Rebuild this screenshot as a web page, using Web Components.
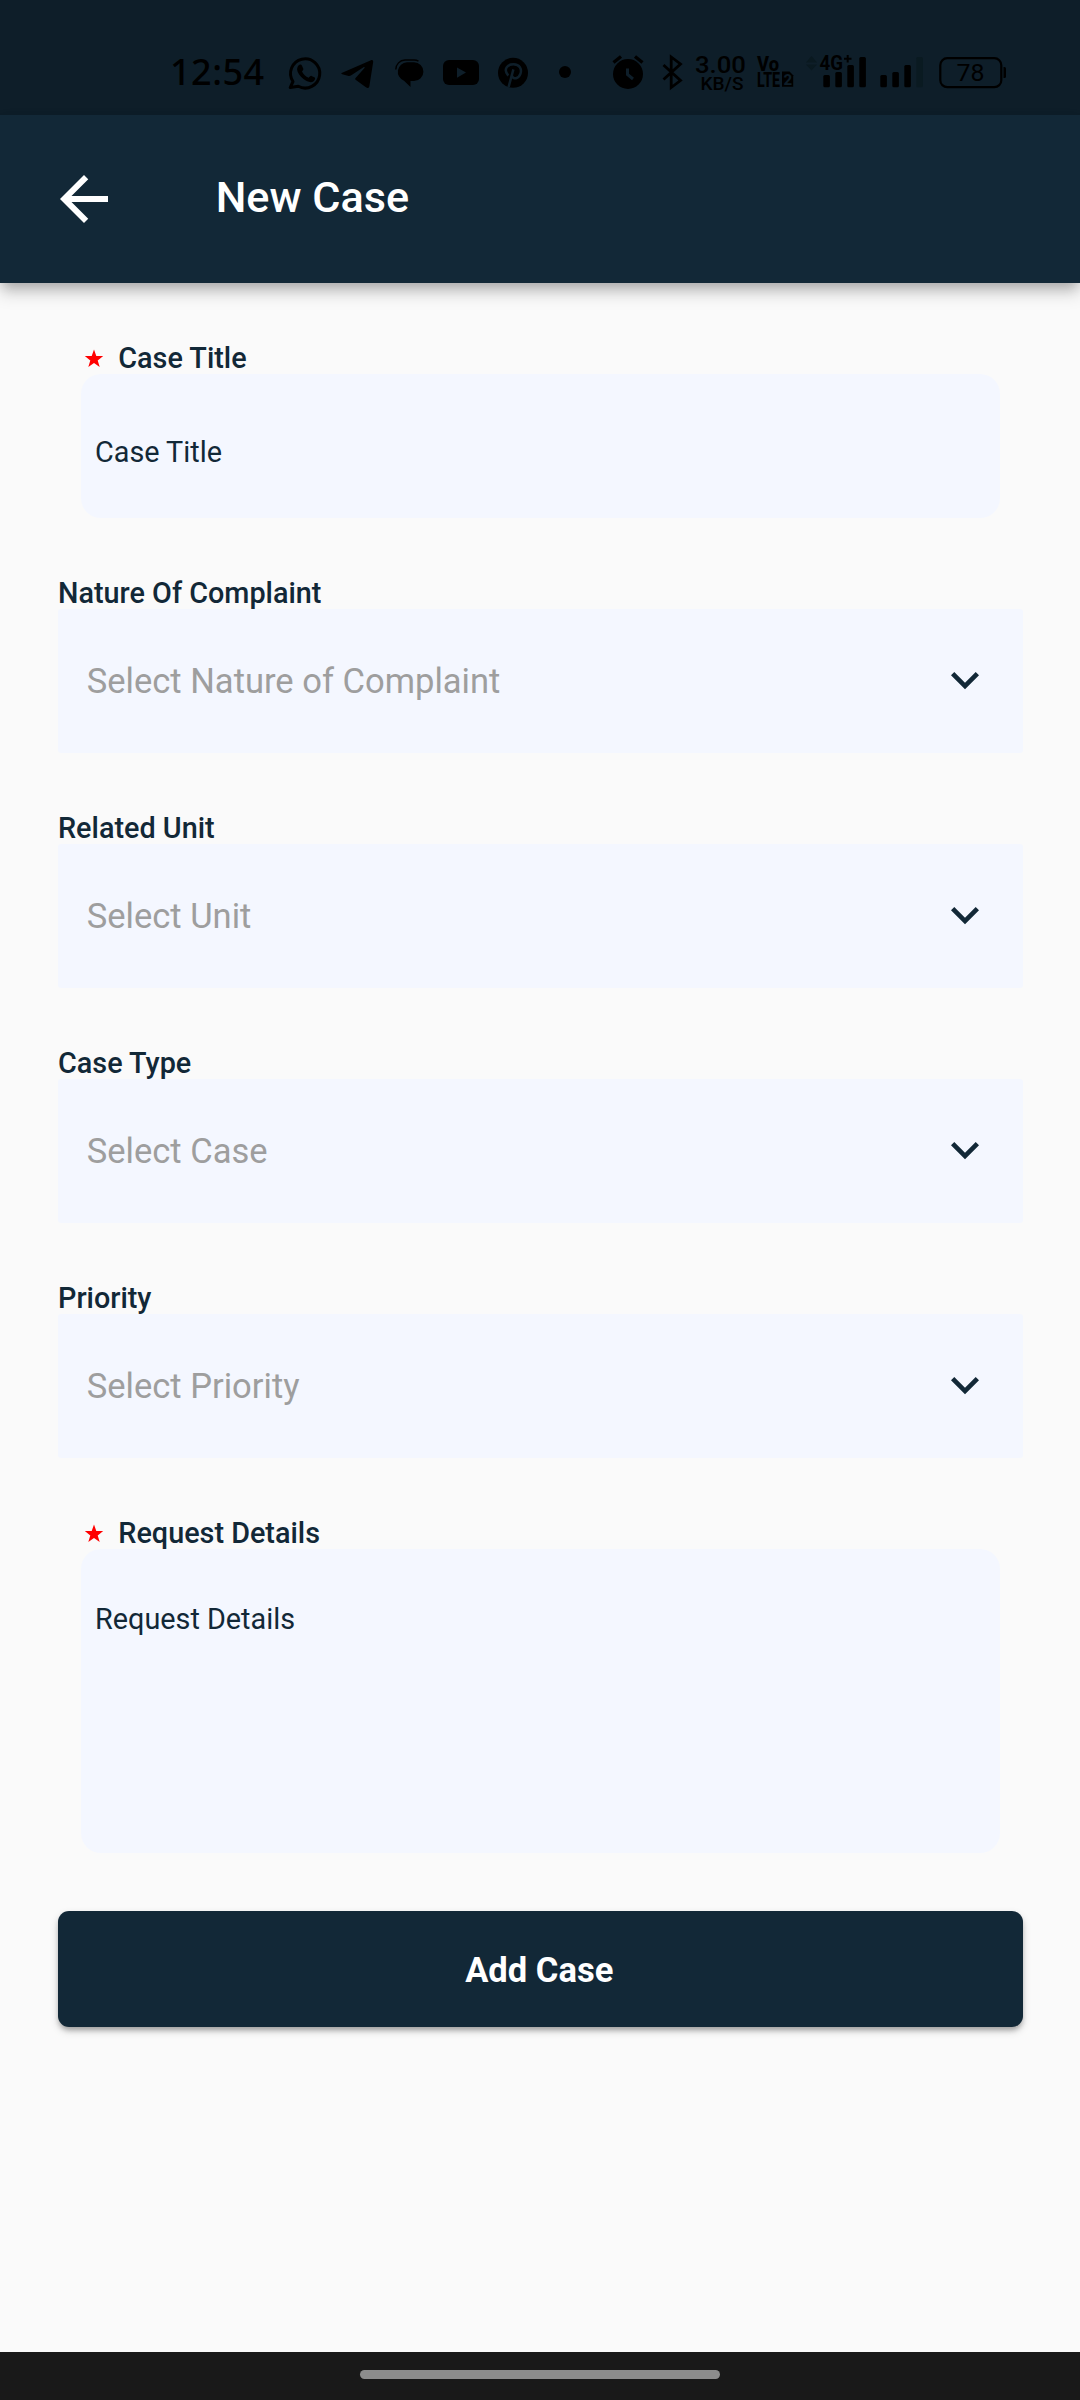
<!DOCTYPE html>
<html lang="en">
<head>
<meta charset="utf-8">
<title>New Case</title>
<style>
html,body{margin:0;padding:0}
body{font-family:Roboto,"Liberation Sans",sans-serif;color:#122837;background:#fafafa}
</style>
</head>
<body>
<case-screen></case-screen>
<script>
const define=(name,html)=>customElements.define(name,class extends HTMLElement{
  constructor(){super();this.attachShadow({mode:'open'}).innerHTML=html;}
});

define('status-bar',`<style>
:host{display:flex;height:115px;background:#0e1e29;color:#000;box-sizing:border-box;padding:50px 0 0 170px;align-items:flex-start}
svg{display:block;flex:none;height:44px;overflow:visible}
.time{font:500 36px/44px "Noto Sans",sans-serif;width:118px;white-space:nowrap;letter-spacing:.5px}
text{font-family:Roboto,sans-serif;font-weight:500}
</style>
<span class="time">12:54</span>
<svg style="width:34px" viewBox="288 50 34 44"><path d="M293 81.5A14.6 14.6 0 1 1 298.3 86.3L290.2 87.6Z" fill="none" stroke="#000" stroke-width="3" stroke-linejoin="round"/><path d="M298.5 65.4c1.4-1.2 2.9-1 3.5.3l1.3 3c.4 1-.9 2.2-1.3 2.8 1.4 3.1 3.6 5 6.7 6.2.8-.7 1.7-2.1 2.8-1.8l3.3 1.7c.8.5 0 2.8-1.2 3.7-2.6 1.8-6.5.6-10.1-2.2-3.6-3-6.3-6.4-6.4-9.5 0-1.7.6-3.3 1.400-4.200Z"/></svg>
<svg style="width:32px;margin-left:19px" viewBox="341 50 32 44"><path d="M342.2 72.8 371 60.3c1.4-.6 2.5.2 2.1 2.2l-3.7 23.4c-.4 2.2-1.7 2.6-3.5 1.4l-10.3-7.6c-.6-.5-.6-1 0-1.6l8.9-10.2c.4-.9-.4-1-1-.6l-12.6 8.3c-1.100.6-2 .6-3.100.2l-5.600-1.600c-1.300-.4-1.200-1 0-1.400Z"/></svg>
<svg style="width:29px;margin-left:22px" viewBox="395 50 29 44"><path d="M407 62.300h7a9.400 9.400 0 0 1 0 18.800h-3.500V87l-6.500-6.300A9.500 9.500 0 0 1 407 62.300Z"/><path d="M395.800 69.500A9.500 9.500 0 0 1 405 60h9a9 9 0 0 1 4.500 1.200" fill="none" stroke="#000" stroke-width="1.400"/></svg>
<svg style="width:36px;margin-left:19px" viewBox="443 50 36 44"><rect x="443" y="60" width="36" height="25" rx="6"/><path d="M457 67.500v10.200l9-5.100Z" fill="#0e1e29"/></svg>
<svg style="width:30px;margin-left:19px" viewBox="498 50 30 44"><circle cx="513" cy="72.800" r="15"/><path d="M508.300 75.600C502.500 69 508 64.200 513.500 64.200c6.500 0 8.400 5.200 7 9.400-1.700 5.200-7.500 6.300-8.300 2.300M513.400 69.300 508.600 87" fill="none" stroke="#0e1e29" stroke-width="2.500"/></svg>
<svg style="width:12px;margin-left:31px" viewBox="559 50 12 44"><circle cx="565" cy="72" r="6"/></svg>
<svg style="width:32px;margin-left:41px" viewBox="612 50 32 44"><circle cx="628" cy="74" r="15"/><path d="m613.500 62.500 7.500-6M642.500 62.500l-7.500-6" stroke="#000" stroke-width="3.400"/><path d="M627.500 68.500v6l5.500 4.500" stroke="#0e1e29" stroke-width="3" fill="none"/></svg>
<svg style="width:21px;margin-left:18px" viewBox="662 50 21 44"><path d="m663.500 65 17 15.500-9.300 7V57l9.300 7-17 15.500" fill="none" stroke="#000" stroke-width="2.800"/></svg>
<svg style="width:50px;margin-left:12px" viewBox="695 50 50 44"><text x="695" y="73.300" font-size="24.500" textLength="51" lengthAdjust="spacingAndGlyphs">3.00</text><text x="700.500" y="90" font-size="18.500" textLength="43" lengthAdjust="spacingAndGlyphs">KB/S</text></svg>
<svg style="width:37px;margin-left:12px" viewBox="757 50 37 44"><text x="757" y="71" font-size="19.500" style="font-weight:800" textLength="22" lengthAdjust="spacingAndGlyphs">Vo</text><text x="757" y="86.800" font-size="20" style="font-weight:800" textLength="23" lengthAdjust="spacingAndGlyphs">LTE</text><path d="M782 71.500h7.500l3.700 3.700v11.600H782Z"/><text x="783.400" y="84.800" font-size="15" fill="#0e1e29" style="font-weight:800">2</text></svg>
<svg style="width:60px;margin-left:12px" viewBox="806 50 60 44"><path d="m806 62.500 5.500-6.500 5.500 6.500ZM806 64.500l5.500 6 5.500-6Z" fill="#0a1920"/><text x="819.500" y="70.300" font-size="21" style="font-weight:700" textLength="23.500" lengthAdjust="spacingAndGlyphs">4G</text><path d="M844 58.800h7.500M847.700 55v7.600" stroke="#000" stroke-width="2"/><g><rect x="823.300" y="75" width="6.600" height="12.200" rx="1.500"/><rect x="835.300" y="72" width="6.600" height="15.200" rx="1.500"/><rect x="847.300" y="65" width="6.600" height="22.200" rx="1.500"/><rect x="859.300" y="57" width="6.600" height="30.200" rx="1.500"/></g></svg>
<svg style="width:43px;margin-left:14px" viewBox="880 50 43 44"><rect x="880.300" y="75" width="6.600" height="12.200" rx="1.500"/><rect x="892.300" y="72" width="6.600" height="15.200" rx="1.500"/><rect x="904.300" y="65" width="6.600" height="22.200" rx="1.500"/><rect x="916.300" y="57" width="6.600" height="30.200" rx="1.500" fill="#0a1a21"/></svg>
<svg style="width:67px;margin-left:16px" viewBox="939 50 67 44"><rect x="940.300" y="58.200" width="61" height="29" rx="7" fill="none" stroke="#000" stroke-width="2.200"/><path d="M1003.500 67h1a1.500 1.500 0 0 1 1.500 1.500v8a1.500 1.500 0 0 1-1.500 1.500h-1Z"/><text x="956.500" y="81.300" font-size="24.500" style="font-weight:400" textLength="28" lengthAdjust="spacingAndGlyphs">78</text></svg>`);

define('app-bar',`<style>
:host{display:flex;height:168px;background:#122837;color:#fff;align-items:center;padding-left:48px;position:relative;box-shadow:0 6px 12px -3px rgba(0,0,0,.22),0 10px 16px 0 rgba(0,0,0,.17)}
svg{width:72px;height:72px;flex:none}
h1{margin:0 0 2px 95.700px;font-size:43.200px;line-height:50px;font-weight:500;white-space:nowrap}
</style>
<svg viewBox="0 0 24 24" fill="#fff"><path d="M20 11H7.830l5.590-5.590L12 4l-8 8 8 8 1.410-1.410L7.830 13H20v-2z"/></svg>
<h1><slot></slot></h1>`);

define('field-label',`<style>
:host{display:flex;height:34px;align-items:center;font-size:28.800px;font-weight:500;white-space:nowrap;position:relative}
svg{display:none;width:20px;height:20px;margin:4px 14.600px 0 2.700px}
:host([required]) svg{display:block}
span{line-height:34px;padding-top:2px}
</style>
<svg viewBox="-10 -10 20 20"><path fill="#f00" d="M0-9.500 2.300-2.900 9.200-2.900 3.700 1.400 5.700 8.100 0 4.100-5.700 8.100-3.700 1.400-9.200-2.900-2.300-2.900Z"/></svg>
<span><slot></slot></span>`);

define('text-field',`<style>
:host{display:block;margin:0 23px}
.box{height:144px;border-radius:20px;background:#f4f7ff;padding:0 14px;box-sizing:border-box;font-size:28.800px;line-height:34px;display:flex;align-items:center}
:host([multiline]) .box{height:304px;align-items:flex-start;padding-top:53px}
.t{padding-top:11px}
:host([multiline]) .t{padding-top:0}
</style>
<field-label required><slot name="label"></slot></field-label>
<div class="box"><div class="t"><slot></slot></div></div>`);

define('select-field',`<style>
:host{display:block}
.box{height:144px;border-radius:3px;background:#f4f7ff;display:flex;align-items:center;justify-content:space-between;padding:0 29.500px 0 28.700px;box-sizing:border-box;color:#9e9e9e;font-size:34.560px;line-height:40px}
svg{width:56px;height:56px;margin-bottom:2px}
</style>
<field-label><slot name="label"></slot></field-label>
<div class="box"><span><slot></slot></span>
<svg viewBox="0 0 24 24" fill="#122837"><path d="M7.410 8.590 12 13.170l4.590-4.580L18 10l-6 6-6-6 1.410-1.410z"/></svg></div>`);

define('submit-button',`<style>
:host{display:flex;height:116px;border-radius:11px;background:#122837;color:#fff;align-items:center;justify-content:center;font-size:34.560px;font-weight:700;line-height:40px;box-shadow:0 4px 5px -1px rgba(0,0,0,.26),0 4px 9px rgba(0,0,0,.16);margin-top:.500px}
span{padding:2px 2px 0 0}
</style><span><slot></slot></span>`);

define('gesture-bar',`<style>
:host{display:flex;height:48px;background:#191919;align-items:flex-start;justify-content:center}
i{display:block;width:360px;height:9px;border-radius:5px;background:#8c8c8c;margin-top:18px}
</style><i></i>`);

define('case-screen',`<style>
:host{display:flex;flex-direction:column;width:1080px;height:2400px;background:#fafafa;overflow:hidden}
main{flex:1;display:flex;flex-direction:column;gap:57px;padding:57px 57.500px 0 58px}
</style>
<status-bar></status-bar>
<app-bar>New Case</app-bar>
<main>
<text-field><span slot="label">Case Title</span>Case Title</text-field>
<select-field><span slot="label">Nature Of Complaint</span>Select Nature of Complaint</select-field>
<select-field><span slot="label">Related Unit</span>Select Unit</select-field>
<select-field><span slot="label">Case Type</span>Select Case</select-field>
<select-field><span slot="label">Priority</span>Select Priority</select-field>
<text-field multiline><span slot="label">Request Details</span>Request Details</text-field>
<submit-button>Add Case</submit-button>
</main>
<gesture-bar></gesture-bar>`);
</script>
</body>
</html>
